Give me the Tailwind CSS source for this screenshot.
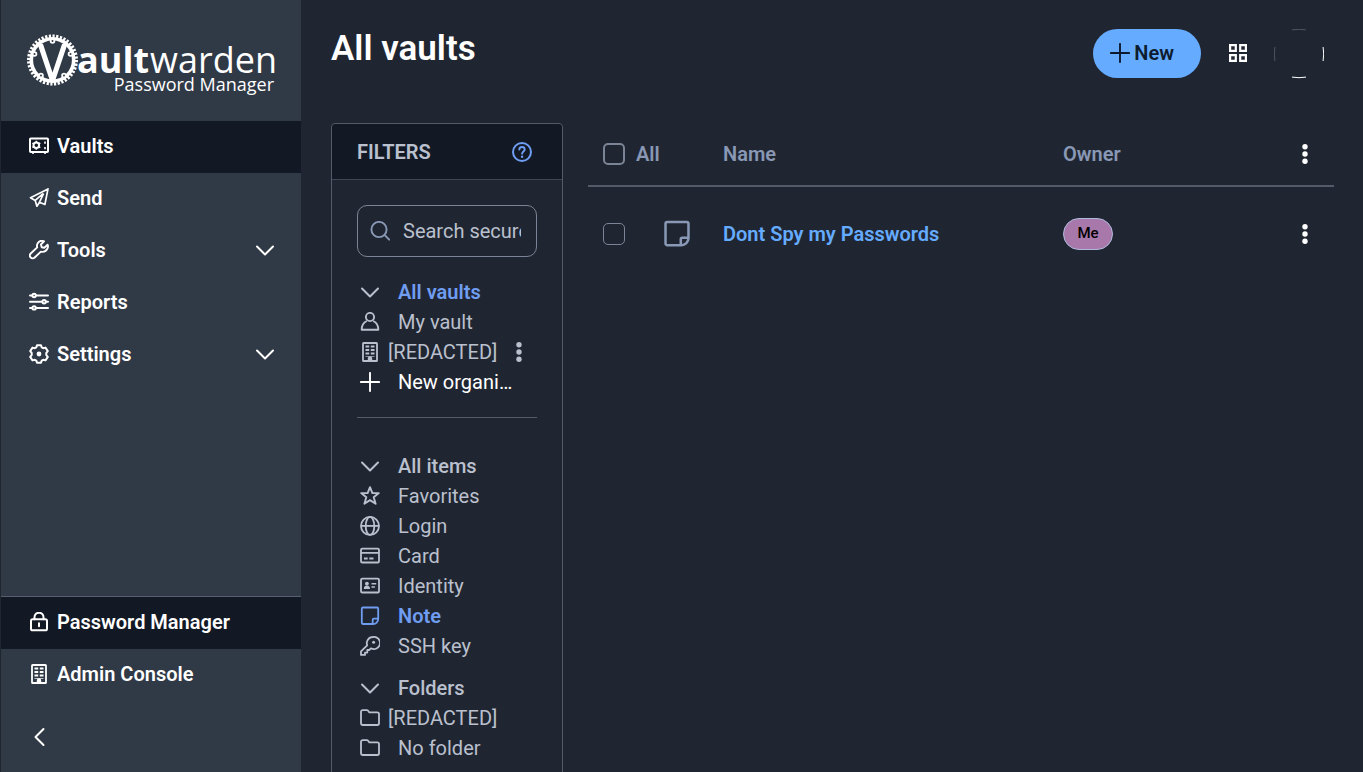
<!DOCTYPE html>
<html lang="en">
<head>
  <meta charset="UTF-8">
  <meta name="viewport" content="width=device-width, initial-scale=1.0">
  <title>All vaults | Vaultwarden</title>
  <script src="https://cdn.jsdelivr.net/npm/@tailwindcss/browser@4"></script>
</head>
<body class="bg-[#202631] text-[#bac0ce] font-[Roboto,sans-serif] text-xl flex h-screen overflow-hidden">

  <!-- Icons -->
  <svg class="hidden" xmlns="http://www.w3.org/2000/svg">
    <symbol id="chevron" viewBox="0 0 20 20"><path d="M2 6.5l8 8 8-8" fill="none" stroke="currentColor" stroke-width="2" stroke-linecap="round" stroke-linejoin="round"/></symbol>
    <symbol id="vault" viewBox="0 0 20 20"><g fill="none" stroke="currentColor" stroke-width="2"><rect x="1" y="2.500" width="18" height="13.500" rx=".8"/><circle cx="7.300" cy="9.300" r="2.800"/><path stroke-width="1.600" d="M7.300 4.800v2M7.300 11.800v2M3.400 7.100l1.700 1M9.500 10.600l1.800 1M3.400 11.500l1.700-1M9.500 8l1.800-1M16 5.500v2.200M16 11v2.200M4 16v2M16 16v2"/></g></symbol>
    <symbol id="send" viewBox="0 0 20 20"><path d="M19 .9L1.500 9.700l4.700 2.700M19 .9L15.900 16.500l-5.400-2.300M19 .9L1.500 9.700M6.200 12.400l1.700 5.800 2.600-4M13.800 5.800L6.200 12.400M14.300 6.200l-3.800 8" fill="none" stroke="currentColor" stroke-width="1.700" stroke-linejoin="round" stroke-linecap="round"/></symbol>
    <symbol id="wrench" viewBox="0 0 20 20"><path d="M15 1.300c-2.300-.9-4.900-.3-6.300 1.900-.8 1.300-.9 2.800-.5 4.200L1.700 13.500c-1.100 1.100-1.100 2.900 0 4s2.900 1.100 4 0l6.200-5.900c2.400.6 5-.3 6.300-2.500.9-1.400 1-3 .4-4.400l-3.300 3.100-2.600-.6-.8-2.700z" fill="none" stroke="currentColor" stroke-width="1.900" stroke-linejoin="round"/></symbol>
    <symbol id="sliders" viewBox="0 0 20 20"><g fill="none" stroke="currentColor" stroke-width="2" stroke-linecap="round"><path d="M1 3.500h2M7 3.500h12M1 9.700h12M17 9.700h2M1 15.900h2M7 15.900h12"/><circle cx="5.100" cy="3.500" r="1.700"/><circle cx="15.100" cy="9.700" r="1.700"/><circle cx="5.100" cy="15.900" r="1.700"/></g></symbol>
    <symbol id="gear" viewBox="0 0 20 20"><path d="M8 1.200h4l.7 2.200 1.500.8 2.300-.6 2.300 3.500-1.500 1.800v2.200l1.500 1.800-2.300 3.500-2.300-.6-1.500.8-.7 2.200H8l-.7-2.200-1.500-.8-2.300.6-2.300-3.500 1.500-1.800V8.900L1.200 7.100l2.300-3.500 2.300.6 1.500-.8z" fill="none" stroke="currentColor" stroke-width="2" stroke-linejoin="round"/><circle cx="10" cy="10" r="2.400" fill="currentColor"/></symbol>
    <symbol id="lock" viewBox="0 0 20 20"><path d="M5.500 7.300V5.200a4.500 4.500 0 0 1 9 0v2.100M10 11.300v3" fill="none" stroke="currentColor" stroke-width="2" stroke-linecap="round"/><rect x="2" y="7.300" width="16" height="11" rx="1.600" fill="none" stroke="currentColor" stroke-width="2"/></symbol>
    <symbol id="building" viewBox="0 0 20 20"><rect x="3" y="1" width="14" height="18" rx=".6" fill="none" stroke="currentColor" stroke-width="1.800"/><path d="M5.500 4.500h3.700M10.800 4.500h3.700M5.500 8h3.700M10.800 8h3.700M5.500 11.500h3.700M10.800 11.500h3.700" stroke="currentColor" stroke-width="1.800"/><path d="M5.500 14.500h9" stroke="currentColor" stroke-width=".7"/><path d="M7.800 19v-2.500a2.200 2.200 0 0 1 4.400 0V19z" fill="currentColor"/></symbol>
    <symbol id="help" viewBox="0 0 20 20"><circle cx="10" cy="10" r="9" fill="none" stroke="currentColor" stroke-width="2"/><path d="M7.300 7.600C7.300 5.900 8.500 5 10 5s2.700 1 2.700 2.500c0 2-2.600 2.200-2.600 4.300" fill="none" stroke="currentColor" stroke-width="1.900" stroke-linecap="round"/><circle cx="10.100" cy="14.800" r="1.200" fill="currentColor"/></symbol>
    <symbol id="search" viewBox="0 0 20 20"><circle cx="9" cy="8.500" r="7.600" fill="none" stroke="currentColor" stroke-width="1.900"/><path d="M14.700 14.200l4.500 4.500" stroke="currentColor" stroke-width="1.900" stroke-linecap="round"/></symbol>
    <symbol id="user" viewBox="0 0 20 20"><circle cx="10" cy="5" r="4.100" fill="none" stroke="currentColor" stroke-width="1.900"/><path d="M6.800 9C3.600 10.500 1.700 13.500 1.700 17.700h16.600c0-4.200-1.900-7.200-5.100-8.700" fill="none" stroke="currentColor" stroke-width="1.900" stroke-linejoin="round"/></symbol>
    <symbol id="plus" viewBox="0 0 20 20"><path d="M10 .9v18.200M.9 10h18.200" stroke="currentColor" stroke-width="1.900" stroke-linecap="round"/></symbol>
    <symbol id="dots" viewBox="0 0 20 20"><circle cx="10" cy="2.700" r="2.700" fill="currentColor"/><circle cx="10" cy="10" r="2.700" fill="currentColor"/><circle cx="10" cy="17.300" r="2.700" fill="currentColor"/></symbol>
    <symbol id="star" viewBox="0 0 20 20"><path d="M10 1.200l2.400 5.900h6.400l-5.100 4.200 1.900 6.500-5.600-3.700-5.600 3.700 1.900-6.500-5.100-4.200h6.400z" fill="none" stroke="currentColor" stroke-width="1.900" stroke-linejoin="round"/></symbol>
    <symbol id="globe" viewBox="0 0 20 20"><g fill="none" stroke="currentColor" stroke-width="1.800"><circle cx="10" cy="9.900" r="9"/><ellipse cx="10" cy="9.900" rx="4.300" ry="9"/><path d="M1 9.900h18"/></g></symbol>
    <symbol id="card" viewBox="0 0 20 20"><rect x="1" y="2.700" width="18" height="13.800" rx="1.300" fill="none" stroke="currentColor" stroke-width="1.800"/><path d="M1 6.900h18M4 12.500h3.700M9.300 12.500h4.200" stroke="currentColor" stroke-width="1.800"/></symbol>
    <symbol id="identity" viewBox="0 0 20 20"><rect x="1" y="2.700" width="18" height="13.800" rx="1.300" fill="none" stroke="currentColor" stroke-width="1.800"/><circle cx="6.900" cy="7.600" r="1.900" fill="currentColor"/><path d="M3.800 13c0-2.400 1-3.600 3.100-3.600s3.100 1.200 3.100 3.600z" fill="currentColor"/><path d="M11.500 7.700h4.700M11.500 11h3.400" stroke="currentColor" stroke-width="1.600"/></symbol>
    <symbol id="note" viewBox="0 0 20 20"><path d="M3 1.500h14a1.200 1.200 0 0 1 1.200 1.200V13a5 5 0 0 1-5.100 5H3a1.200 1.200 0 0 1-1.200-1.200V2.700A1.200 1.200 0 0 1 3 1.500zM12.700 17.800v-4.100a1 1 0 0 1 1-1H18" fill="none" stroke="currentColor" stroke-width="1.800" stroke-linejoin="round"/></symbol>
    <symbol id="key" viewBox="0 0 20 20"><path d="M12.900 1a6.100 6.100 0 0 0-5.700 8.300L1 15.300v3.600h4v-2.300h2.300V14h1.900l1.700-1.700A6.100 6.100 0 1 0 12.900 1z" fill="none" stroke="currentColor" stroke-width="1.800" stroke-linejoin="round"/><circle cx="13.600" cy="6.300" r="1.500" fill="currentColor"/></symbol>
    <symbol id="folder" viewBox="0 0 20 20"><path d="M1 15.300V3.800a1.700 1.700 0 0 1 1.700-1.700h4.100c.6 0 1 .2 1.300.6l1.200 1.700h8a1.700 1.700 0 0 1 1.700 1.700v9.200a1.700 1.700 0 0 1-1.700 1.700H2.700A1.700 1.700 0 0 1 1 15.300z" fill="none" stroke="currentColor" stroke-width="1.800"/></symbol>
  </svg>

  <!-- Sidebar -->
  <nav class="w-[301px] shrink-0 flex flex-col bg-[#303946] border-l border-[#20262f] text-white font-semibold">
    <a href="#" class="block pl-[25px] pt-7 h-[121px]" aria-label="Vaultwarden Password Manager">
      <svg class="w-[252px] h-[72px]" viewBox="0 0 252 72" fill="none">
        <circle cx="26.500" cy="32" r="23.800" stroke="#fff" stroke-width="3.400" pathLength="80" stroke-dasharray="1.200 .8"/>
        <circle cx="26.500" cy="32" r="21.200" stroke="#fff" stroke-width="3.600"/>
        <path d="M11.500 16h5.500L26.500 44.500 36 16h5.500L29 53h-5z" fill="#fff"/>
        <g fill="#303946" stroke="#fff" stroke-width="1.800">
          <circle cx="26.500" cy="13" r="1.900"/>
          <circle cx="8.500" cy="26" r="1.900"/>
          <circle cx="44.500" cy="26" r="1.900"/>
          <circle cx="15" cy="47.500" r="1.900"/>
          <circle cx="38" cy="47.500" r="1.900"/>
        </g>
        <g fill="#fff" font-family="Open Sans, sans-serif">
          <text x="51" y="45" font-size="36" font-weight="700">ault</text>
          <text x="251" y="45" font-size="36" font-weight="400" text-anchor="end">warden</text>
          <text x="248" y="63" font-size="18" font-weight="400" text-anchor="end">Password Manager</text>
        </g>
      </svg>
    </a>
    <a href="#" class="flex items-center h-[52px] pb-0.5 pl-7 pr-[26px] gap-2 bg-[#121925]"><svg class="size-5"><use href="#vault"/></svg>Vaults</a>
    <a href="#" class="flex items-center h-[52px] pb-0.5 pl-7 pr-[26px] gap-2"><svg class="size-5"><use href="#send"/></svg>Send</a>
    <button class="flex items-center h-[52px] pb-0.5 pl-7 pr-[26px] gap-2"><svg class="size-5"><use href="#wrench"/></svg>Tools<svg class="size-5 ml-auto"><use href="#chevron"/></svg></button>
    <a href="#" class="flex items-center h-[52px] pb-0.5 pl-7 pr-[26px] gap-2"><svg class="size-5"><use href="#sliders"/></svg>Reports</a>
    <button class="flex items-center h-[52px] pb-0.5 pl-7 pr-[26px] gap-2"><svg class="size-5"><use href="#gear"/></svg>Settings<svg class="size-5 ml-auto"><use href="#chevron"/></svg></button>

    <div class="mt-auto border-t border-[#566070]">
      <a href="#" class="flex items-center h-[52px] pb-0.5 pl-7 gap-2 bg-[#121925]"><svg class="size-5"><use href="#lock"/></svg>Password Manager</a>
      <a href="#" class="flex items-center h-[52px] pb-0.5 pl-7 gap-2"><svg class="size-5"><use href="#building"/></svg>Admin Console</a>
      <button class="flex items-center h-[71px] pl-[29px]" aria-label="Collapse menu"><svg class="size-5 rotate-90"><use href="#chevron"/></svg></button>
    </div>
  </nav>

  <main class="flex-1 min-w-0 flex flex-col pl-[30px] pr-[29px]">
    <header class="flex items-center h-[123px] shrink-0 pb-4 pr-[10px]">
      <h1 class="text-white text-[35px] font-semibold pb-[10px]">All vaults</h1>
      <button class="ml-auto h-[49px] pb-0.5 pl-[17px] pr-[27px] rounded-full bg-[#65abff] text-[#0d1b2e] font-semibold flex items-center gap-1"><svg class="size-5"><use href="#plus"/></svg>New</button>
      <button class="ml-[27px]" aria-label="Switch products">
        <svg class="size-5 text-white" viewBox="0 0 20 20" fill="none" stroke="currentColor" stroke-width="2.200"><path d="M2.100 1.100h5.700v5.700H2.100zM12.200 1.100h5.700v5.700h-5.700zM2.100 11.200h5.700v5.700H2.100zM12.200 11.200h5.700v5.700h-5.700z"/></svg>
      </button>
      <button class="ml-[26px]" aria-label="Account">
        <svg class="size-[50px]" viewBox="0 0 50 50" fill="none">
          <path d="M18 .9Q25-.3 32 .9" stroke="#5c626c" stroke-width=".8"/>
          <path d="M.9 18Q-.3 25 .9 32" stroke="#5c626c" stroke-width=".8"/>
          <path d="M49.100 18Q50.300 25 49.100 32" stroke="#fff"/>
          <path d="M18 48.100Q25 49.300 32 48.100" stroke="#fff"/>
        </svg>
      </button>
    </header>

    <div class="flex flex-1 min-h-0 gap-[25px]">
      <!-- Filters -->
      <aside class="w-[232px] shrink-0 self-start border border-[#535b69] rounded">
        <div class="h-14 pl-[25px] pr-[30px] flex items-center justify-between bg-[#121925] border-b border-[#414855] rounded-t">
          <h2 class="font-semibold">FILTERS</h2>
          <a href="#" class="text-[#6f9df1]" aria-label="Learn more"><svg class="size-5"><use href="#help"/></svg></a>
        </div>
        <div class="px-[25px] pt-[25px] pb-6">
          <label class="flex items-center h-[52px] px-3 border border-[#7b8494] rounded-[10px] gap-[13px]">
            <svg class="size-5 shrink-0 text-[#8898b5]"><use href="#search"/></svg>
            <input type="text" aria-label="Search secure notes" placeholder="Search secure notes" class="min-w-0 w-full mr-[3px] bg-transparent outline-none placeholder:text-[#bac0ce]">
          </label>

          <ul class="pt-5 pb-5 border-b border-[#535b69]">
            <li><button class="flex items-center h-[30px] pl-[3px] gap-[18px]"><svg class="size-5"><use href="#chevron"/></svg><span class="text-[#6f9df1] font-semibold">All vaults</span></button></li>
            <li><button class="flex items-center h-[30px] pl-[3px] gap-[18px]"><svg class="size-5"><use href="#user"/></svg>My vault</button></li>
            <li class="flex items-center">
              <button class="flex items-center h-[30px] pl-[3px] gap-2"><svg class="size-5"><use href="#building"/></svg>[REDACTED]</button>
              <button class="ml-3" aria-label="Options"><svg class="size-5"><use href="#dots"/></svg></button>
            </li>
            <li><button class="flex items-center w-full h-[30px] pl-[3px] pr-6 gap-[18px] text-white"><svg class="size-5 shrink-0"><use href="#plus"/></svg><span class="truncate">New organization</span></button></li>
          </ul>

          <ul class="pt-[33px]">
            <li><button class="flex items-center h-[30px] pl-[3px] gap-[18px] font-medium"><svg class="size-5"><use href="#chevron"/></svg>All items</button></li>
            <li><button class="flex items-center h-[30px] pl-[3px] gap-[18px]"><svg class="size-5"><use href="#star"/></svg>Favorites</button></li>
            <li><button class="flex items-center h-[30px] pl-[3px] gap-[18px]"><svg class="size-5"><use href="#globe"/></svg>Login</button></li>
            <li><button class="flex items-center h-[30px] pl-[3px] gap-[18px]"><svg class="size-5"><use href="#card"/></svg>Card</button></li>
            <li><button class="flex items-center h-[30px] pl-[3px] gap-[18px]"><svg class="size-5"><use href="#identity"/></svg>Identity</button></li>
            <li><button class="flex items-center h-[30px] pl-[3px] gap-[18px] text-[#6f9df1] font-semibold"><svg class="size-5"><use href="#note"/></svg>Note</button></li>
            <li><button class="flex items-center h-[30px] pl-[3px] gap-[18px]"><svg class="size-5"><use href="#key"/></svg>SSH key</button></li>
          </ul>

          <ul class="pt-3">
            <li><button class="flex items-center h-[30px] pl-[3px] gap-[18px] font-medium"><svg class="size-5"><use href="#chevron"/></svg>Folders</button></li>
            <li><button class="flex items-center h-[30px] pl-[3px] gap-2"><svg class="size-5"><use href="#folder"/></svg>[REDACTED]</button></li>
            <li><button class="flex items-center h-[30px] pl-[3px] gap-[18px]"><svg class="size-5"><use href="#folder"/></svg>No folder</button></li>
          </ul>
        </div>
      </aside>

      <!-- Items -->
      <div class="flex-1 min-w-0">
        <table class="w-full table-fixed text-left">
          <thead class="text-[#8898b5] border-b-2 border-[#535b69]">
            <tr class="h-[63px]">
              <th class="w-[135px] pl-[15px] font-semibold">
                <label class="flex items-center gap-[11px]"><input type="checkbox" class="appearance-none size-[22px] border-2 border-[#7b8494] rounded-[5px]">All</label>
              </th>
              <th class="font-semibold">Name</th>
              <th class="w-[211px] font-semibold">Owner</th>
              <th class="w-[60px]"><button class="flex text-white ml-[21px]" aria-label="Options"><svg class="size-5"><use href="#dots"/></svg></button></th>
            </tr>
          </thead>
          <tbody>
            <tr class="h-[94px]">
              <td class="pl-[15px]">
                <div class="flex items-center gap-[38px]">
                  <input type="checkbox" aria-label="Dont Spy my Passwords" class="appearance-none size-[22px] border border-[#7b8494] rounded-[5px]">
                  <svg class="size-7 text-[#8898b5]"><use href="#note"/></svg>
                </div>
              </td>
              <td><a href="#" class="text-[#65abff] font-semibold">Dont Spy my Passwords</a></td>
              <td><button class="flex items-center justify-center h-8 w-[50px] rounded-full border border-[#aeb9dc] bg-[#a878ab] text-black text-[15px] font-medium">Me</button></td>
              <td><button class="flex text-white ml-[21px]" aria-label="Options"><svg class="size-5"><use href="#dots"/></svg></button></td>
            </tr>
          </tbody>
        </table>
      </div>
    </div>
  </main>
</body>
</html>
